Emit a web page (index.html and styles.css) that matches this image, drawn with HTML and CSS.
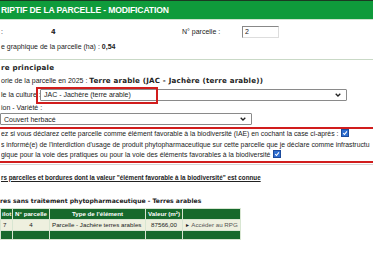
FILE: index.html
```html
<!DOCTYPE html>
<html lang="fr">
<head>
<meta charset="utf-8">
<title>Descriptif de la parcelle</title>
<link rel="stylesheet" href="styles.css">
</head>
<body>
<div class="header">RIPTIF DE LA PARCELLE - MODIFICATION</div>

<div class="sec1">
  <div class="row r1">
    <span class="c1">:</span>
    <span class="c2">4</span>
    <span class="c3">N° parcelle :</span>
    <span class="numbox">2</span>
  </div>
  <div class="row">e graphique de la parcelle (ha) : <strong>0,54</strong></div>
</div>
<div class="sep"></div>

<div class="sec2">
  <div class="row title">re principale</div>
  <div class="row">orie de la parcelle en 2025 : <b>Terre arable (JAC - Jachère (terre arable))</b></div>
  <div class="selrow">
    <span class="lbl">le la culture :</span>
    <div class="sel wide">
      <span>JAC - Jachère (terre arable)</span>
      <svg class="chev" width="6" height="4" viewBox="0 0 6 4"><polyline points="0.7,0.7 3,3 5.3,0.7" fill="none" stroke="#222" stroke-width="1.3"/></svg>
    </div>
    <div class="redmark"></div>
  </div>
  <div class="row">ion - Variété :</div>
  <div class="sel mid">
    <span>Couvert herbacé</span>
    <svg class="chev" width="6" height="4" viewBox="0 0 6 4"><polyline points="0.7,0.7 3,3 5.3,0.7" fill="none" stroke="#222" stroke-width="1.3"/></svg>
  </div>
</div>

<div class="iae">
  <div class="line">ez si vous déclarez cette parcelle comme élément favorable à la biodiversité (IAE) en cochant la case ci-après : <span class="cb"><svg width="6" height="6" viewBox="0 0 6 6"><polyline points="1.2,3.2 2.5,4.5 4.9,1.4" fill="none" stroke="#fff" stroke-width="1.1"/></svg></span></div>
  <div class="line">s informé(e) de l'interdiction d'usage de produit phytopharmaceutique sur cette parcelle que je déclare comme infrastructu</div>
  <div class="line">gique pour la voie des pratiques ou pour la voie des éléments favorables à la biodiversité <span class="cb"><svg width="6" height="6" viewBox="0 0 6 6"><polyline points="1.2,3.2 2.5,4.5 4.9,1.4" fill="none" stroke="#fff" stroke-width="1.1"/></svg></span></div>
</div>
<div class="sep2"></div>

<div class="known">rs parcelles et bordures dont la valeur "élément favorable à la biodiversité" est connue</div>
<div class="subtitle">res sans traitement phytopharmaceutique - Terres arables</div>

<table class="tbl">
  <colgroup>
    <col class="w1"><col class="w2"><col class="w3"><col class="w4"><col class="w5">
  </colgroup>
  <thead>
    <tr><th>ilot</th><th>N° parcelle</th><th>Type de l'élément</th><th>Valeur (m²)</th><th></th></tr>
  </thead>
  <tbody>
    <tr><td class="left">7</td><td>4</td><td class="left">Parcelle - Jachère terres arables</td><td>87566,00</td><td class="left link"><span class="tri">►</span> Accéder au RPG</td></tr>
  </tbody>
  <tfoot>
    <tr><td></td><td></td><td></td><td></td><td></td></tr>
  </tfoot>
</table>
</body>
</html>
```
FILE: styles.css
```css
html, body {
  margin: 0;
  padding: 0;
  background: #fff;
}
body {
  width: 373px;
  height: 257px;
  overflow: hidden;
  font-family: "Liberation Sans", Arial, sans-serif;
  font-size: 7px;
  color: #222;
}
b, .title {
  font-family: "DejaVu Sans", Verdana, sans-serif;
  font-weight: bold;
  font-size: 7.1px;
  letter-spacing: 0.2px;
}
strong {
  font-weight: bold;
  font-size: 7px;
}
.header {
  height: 18px;
  border-top: 1px solid #1b3a22;
  background: #0f9b3b;
  color: #fff;
  font-weight: bold;
  font-size: 8.6px;
  line-height: 19px;
  padding-left: 1px;
  letter-spacing: -0.15px;
  border-bottom: 1px solid #cfe3cf;
}
.sec1 {
  padding-top: 6px;
  display: flex;
  flex-direction: column;
  gap: 3px;
}
.row {
  height: 12px;
  line-height: 12px;
  padding-left: 1px;
  white-space: nowrap;
}
.r1 {
  display: flex;
  align-items: center;
}
.c1 { width: 50px; }
.c2 { width: 131px; font-family: "DejaVu Sans", Verdana, sans-serif; font-weight: bold; font-size: 6.8px; }
.c3 { width: 60px; }
.numbox {
  width: 33px;
  height: 10px;
  line-height: 10px;
  border: 1px solid #888;
  border-right-color: #ddd;
  border-bottom-color: #ddd;
  padding-left: 2px;
  font-size: 7px;
}
.sep {
  margin-top: 6px;
  height: 1px;
  background: #c9d9c6;
}
.sec2 {
  padding-top: 2px;
}
.sec2 .row {
  height: 11px;
  line-height: 11px;
}
.title {
  margin-bottom: 2px;
}
.selrow {
  position: relative;
  display: flex;
  align-items: center;
  height: 15px;
  margin-top: 1px;
  padding-left: 1px;
}
.lbl {
  width: 39px;
  white-space: nowrap;
}
.sel {
  height: 10px;
  border: 1px solid #8a8a8a;
  border-radius: 1px;
  background: #fff;
  display: flex;
  align-items: center;
  justify-content: space-between;
  padding: 0 5px 0 3px;
  box-sizing: content-box;
  white-space: nowrap;
}
.sel.wide { width: 297px; }
.sel.mid { width: 242px; margin-top: 0; }
.chev { display: block; }
.redmark {
  position: absolute;
  left: 36px;
  top: 0;
  width: 118px;
  height: 13px;
  border: 2px solid #d11d1d;
}
.iae {
  margin-top: 2px;
  border-top: 2px solid #d11d1d;
  border-bottom: 2px solid #d11d1d;
  padding: 0 0 0 1px;
  font-size: 6.85px;
}
.iae .line {
  height: 10.5px;
  line-height: 10.5px;
  white-space: nowrap;
  overflow: hidden;
}
.cb {
  display: inline-block;
  width: 6px;
  height: 6px;
  background: #2f6fd1;
  border: 0.5px solid #1c4b9c;
  vertical-align: -1px;
  margin-left: 1px;
}
.cb svg { display: block; }
.sep2 {
  margin-top: 1px;
  height: 1px;
  background: #d6d6d6;
}
.known {
  margin-top: 8px;
  font-weight: bold;
  font-size: 6.3px;
  text-decoration: underline;
  white-space: nowrap;
  padding-left: 1px;
  height: 10px;
  line-height: 10px;
}
.subtitle {
  margin-top: 13px;
  font-family: "DejaVu Sans", Verdana, sans-serif;
  font-weight: bold;
  font-size: 6.1px;
  white-space: nowrap;
  height: 10px;
  line-height: 10px;
}
.tbl {
  margin-top: 2px;
  border-collapse: collapse;
  table-layout: fixed;
  width: 240px;
  font-size: 6.2px;
}
.tbl th, .tbl td {
  border: 1px solid #d8e6d2;
  padding: 0 1px;
  white-space: nowrap;
  overflow: hidden;
}
.tbl th {
  background: #17692c;
  color: #fff;
  font-weight: bold;
  height: 10px;
  line-height: 10px;
  text-align: center;
}
.tbl tbody td {
  background: #eef0df;
  height: 10px;
  line-height: 10px;
  text-align: center;
}
.tbl tbody td.left { padding-left: 2px; }
.tbl tfoot td {
  background: #17692c;
  height: 8px;
}
.tbl .left { text-align: left; }
.w1 { width: 12px; }
.w2 { width: 37px; }
.w3 { width: 96px; }
.w4 { width: 37px; }
.w5 { width: 58px; }
.link { color: #555; }
.tri { color: #222; font-size: 5px; }
```
